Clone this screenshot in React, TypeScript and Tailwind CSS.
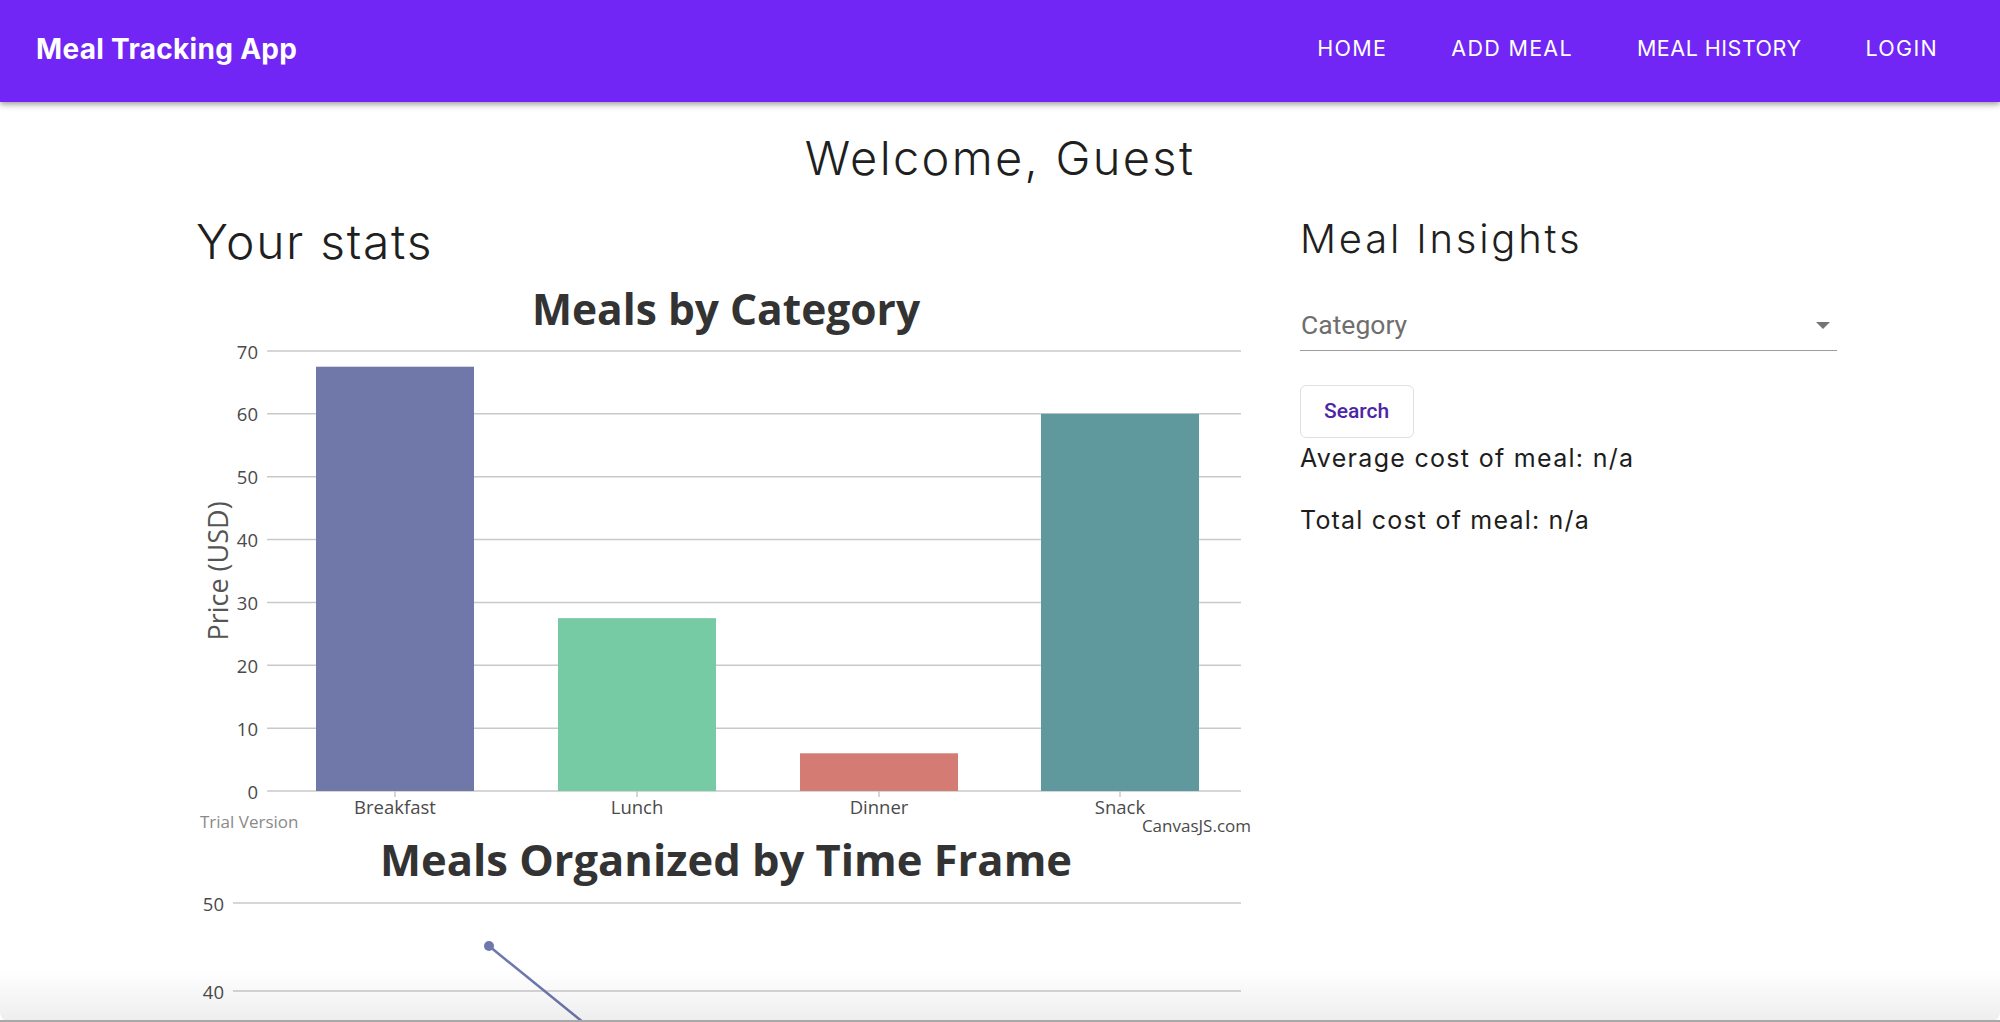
import React from "react";

const chartFont = "'Open Sans', 'DejaVu Sans', sans-serif";

function Charts() {
  const grid = [70, 60, 50, 40, 30, 20, 10, 0];
  const y0 = 520;
  const unit = 440 / 70;
  const bars = [
    { label: "Breakfast", v: 67.5, x: 120, color: "#6f78a9" },
    { label: "Lunch", v: 27.5, x: 362, color: "#76cba5" },
    { label: "Dinner", v: 6, x: 604, color: "#d47c73" },
    { label: "Snack", v: 60, x: 845, color: "#5f999d" },
  ];
  const grid2 = [
    { v: 50, y: 64 },
    { v: 40, y: 152 },
  ];
  return (
    <svg width="1064" height="751" viewBox="0 0 1064 751" className="block" style={{ fontFamily: chartFont }}>
      {/* Meals by Category */}
      <text x="530" y="54" textAnchor="middle" fontSize="42.5" fontWeight="700" fill="#333333">
        Meals by Category
      </text>
      {grid.map((g) => {
        const y = y0 - g * unit;
        return (
          <g key={g}>
            <line x1="71" x2="1045" y1={y} y2={y} stroke="#c9c9c9" strokeWidth="1.5" />
            <text x="62" y={y} textAnchor="end" dominantBaseline="central" fontSize="18.5" fill="#4a4a4a">
              {g}
            </text>
          </g>
        );
      })}
      {bars.map((b) => (
        <g key={b.label}>
          <rect x={b.x} y={y0 - b.v * unit} width="158" height={b.v * unit} fill={b.color} />
          <line x1={b.x + 79} x2={b.x + 79} y1={y0} y2={y0 + 6} stroke="#c9c9c9" strokeWidth="1.5" />
          <text x={b.x + 79} y="535" textAnchor="middle" dominantBaseline="central" fontSize="18.5" fill="#4a4a4a">
            {b.label}
          </text>
        </g>
      ))}
      <text
        transform="translate(21 300) rotate(-90)"
        textAnchor="middle"
        dominantBaseline="central"
        fontSize="27"
        fill="#555555"
      >
        Price (USD)
      </text>
      <text x="4" y="550" dominantBaseline="central" fontSize="17" fill="#8a8a8a">
        Trial Version
      </text>
      <text x="1055" y="554" textAnchor="end" dominantBaseline="central" fontSize="17" fill="#4a4a4a">
        CanvasJS.com
      </text>

      {/* Meals Organized by Time Frame */}
      <g transform="translate(0 568)">
        <text x="530" y="37" textAnchor="middle" fontSize="43.5" fontWeight="700" fill="#333333">
          Meals Organized by Time Frame
        </text>
        {grid2.map((g) => (
          <g key={g.v}>
            <line x1="37" x2="1045" y1={g.y} y2={g.y} stroke="#c9c9c9" strokeWidth="1.5" />
            <text x="28" y={g.y} textAnchor="end" dominantBaseline="central" fontSize="18.5" fill="#4a4a4a">
              {g.v}
            </text>
          </g>
        ))}
        <line x1="293" y1="107" x2="483" y2="261" stroke="#6d78ad" strokeWidth="2.5" />
        <circle cx="293" cy="107" r="5" fill="#6d78ad" />
      </g>
    </svg>
  );
}

export default function App() {
  return (
    <div
      className="relative h-[1022px] w-full overflow-hidden bg-white text-[#1d1d1d]"
      style={{ fontFamily: "Inter, 'Noto Sans', sans-serif" }}
    >
      <nav className="relative z-10 flex h-[102px] items-center justify-between bg-[#7126f5] pb-[5px] pl-[36px] pr-[62px] shadow-[0_2px_4px_-1px_rgba(0,0,0,0.2),0_4px_5px_0_rgba(0,0,0,0.14),0_1px_10px_0_rgba(0,0,0,0.12)]">
        <div className="text-[28px] font-bold tracking-[0.3px] text-white">Meal Tracking App</div>
        <div className="flex items-center gap-[64px] text-[21.5px] font-normal tracking-[1.3px] text-white">
          <span>HOME</span>
          <span>ADD MEAL</span>
          <span className="tracking-[0.5px]">MEAL HISTORY</span>
          <span>LOGIN</span>
        </div>
      </nav>

      <h1 className="mt-[27px] text-center text-[47px] font-light leading-[58px] tracking-[2.3px] text-[#1f1f1f]">
        Welcome, Guest
      </h1>

      <div className="mt-[26px] flex pl-[196px]">
        <div className="w-[1064px]">
          <h2 className="text-[48px] font-light leading-[58px] tracking-[1.7px] text-[#1f1f1f]">Your stats</h2>
          <Charts />
        </div>

        <div className="ml-[40px] w-[537px] pt-[2px]">
          <h3 className="text-[40px] font-light leading-[48px] tracking-[2.8px] text-[#1f1f1f]">Meal Insights</h3>
          <div
            className="mt-[46px] flex items-center justify-between border-b border-[#9e9e9e] pb-[9px]"
            style={{ fontFamily: "Roboto, sans-serif" }}
          >
            <span className="pl-px text-[26.5px] leading-[32px] text-[#6e6e6e]">Category</span>
            <svg width="14" height="7" viewBox="0 0 14 7" className="mr-[7px]">
              <path d="M0 0 L14 0 L7 7 Z" fill="#757575" />
            </svg>
          </div>
          <button
            className="mt-[34px] flex h-[53px] w-[114px] items-center rounded-[6px] border border-[#e0e0e0] bg-white pl-[23px] text-[21px] font-medium text-[#4c25a8]"
            style={{ fontFamily: "Roboto, sans-serif" }}
          >
            Search
          </button>
          <p className="mt-[5px] text-[25px] leading-[30px] tracking-[1.3px] text-[#1d1d1d]">Average cost of meal: n/a</p>
          <p className="mt-[32px] text-[25px] leading-[30px] tracking-[1.2px] text-[#1d1d1d]">Total cost of meal: n/a</p>
        </div>
      </div>

      <div className="pointer-events-none absolute inset-x-0 bottom-0 h-[52px] rounded-b-[10px] bg-gradient-to-b from-black/0 to-black/[0.07]" />
      <div className="pointer-events-none absolute inset-x-0 bottom-0 h-[2px] bg-[#a8a8a8]" />
    </div>
  );
}
